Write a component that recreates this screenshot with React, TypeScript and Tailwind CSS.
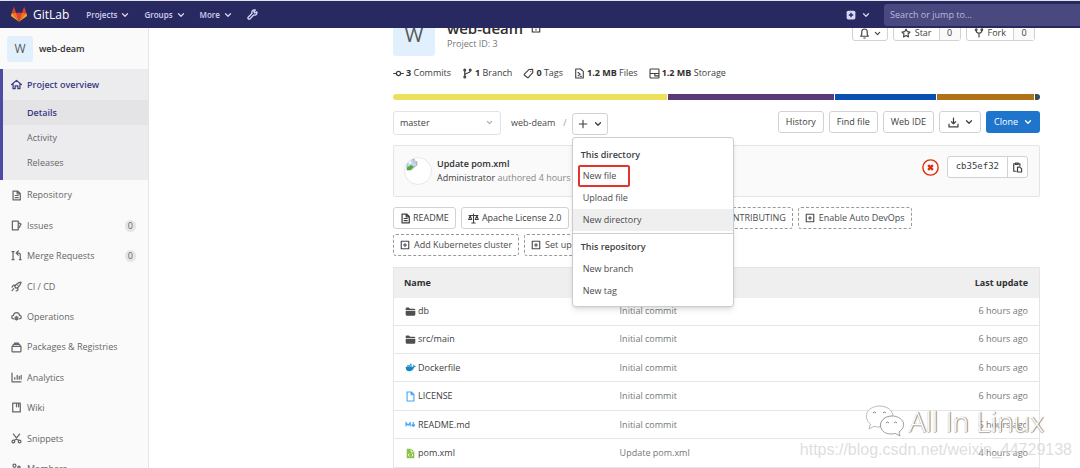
import React from "react";

type IconProps = { className?: string };

const Icon = ({ className = "size-[11px]", children }: IconProps & { children: React.ReactNode }) => (
  <svg
    viewBox="0 0 16 16"
    className={`shrink-0 ${className}`}
    fill="none"
    stroke="currentColor"
    strokeWidth="1.8"
    strokeLinecap="round"
    strokeLinejoin="round"
    aria-hidden="true"
  >
    {children}
  </svg>
);

const ChevronDown = ({ className = "size-2" }: IconProps) => (
  <Icon className={className}><path d="M3 5.5l5 5 5-5" strokeWidth="2.6" /></Icon>
);

const HomeIcon = () => (
  <Icon><path d="M1 8l7-6 7 6M3 7.5V14h3v-4h4v4h3V7.5" /></Icon>
);
const DocIcon = ({ className }: IconProps) => (
  <Icon className={className}><path d="M3 1.5h6.5L13.5 5v9.5H3zM6 8h4.5M6 11h4.5M9 2v3.5h4" /></Icon>
);
const IssuesIcon = () => (
  <Icon><path d="M2 1.500h8.500v13H2zM10.500 3.500l4 2.500-2.500 5h-1.500" /></Icon>
);
const MergeIcon = () => (
  <Icon>
    <path d="M3 3v10M1.500 2.500h3M1.500 14h3M9 4.500h2q2.500 0 2.500 2.500V14M12.300 14h2.400M10.500 1.500L7.500 4.500l3 3" />
  </Icon>
);
const RocketIcon = () => (
  <Icon>
    <path d="M5.500 8.500Q8 2.500 14.500 1.500 13.500 8 7.500 10.500zM6.500 6L3 6.500 1.500 9M10 9.500V13L7.500 14.500M4 11l-2.500 3M10 6h.01" />
  </Icon>
);
const OperationsIcon = () => (
  <Icon>
    <path d="M3.500 11.500C0 10.500.5 6.500 3.500 6.500 4.500 1 11.500 1 12.500 6.500c3 0 3.500 4 0 5" />
    <circle cx="8" cy="10.500" r="2" />
    <path d="M8 7.500v6M5.500 9l5 3M10.500 9l-5 3" strokeWidth="1" />
  </Icon>
);
const PackageIcon = () => (
  <Icon><path d="M1.500 6.500h13v6.500q0 1.500-1.500 1.500H3q-1.500 0-1.500-1.500zM2 6.500l1.500-3h9l1.500 3M5 1.500h6" /></Icon>
);
const ChartIcon = () => (
  <Icon><path d="M1.500 1.500v12.800h13M5.500 10.500V8M9 10.500V5M12 10.500V6.500M14.800 10V5" /></Icon>
);
const BookIcon = () => (
  <Icon><path d="M2.500 1.500h11v13h-11zM8 2v5M11 2v5" /></Icon>
);
const ScissorsIcon = () => (
  <Icon>
    <circle cx="3.500" cy="12.500" r="2" />
    <circle cx="12.500" cy="12.500" r="2" />
    <path d="M3.500 1.500l7.500 9.500M12.500 1.500L5 11" />
  </Icon>
);
const MembersIcon = () => (
  <Icon>
    <circle cx="5" cy="4" r="2.200" />
    <circle cx="11.500" cy="6" r="1.600" />
    <path d="M1.500 14v-2q0-3 3.500-3t3.500 3v2zM11 10.500q3.500 0 3.500 3" />
  </Icon>
);
const WrenchIcon = () => (
  <Icon className="size-[11px]">
    <path
      d="M14.300 4.200l-2.800 1.600-1.400-1.500L12 1.500C8.500.8 6.300 3.500 7.200 6.500L2 11.500c-1.800 2 .8 4.500 2.500 2.700l5.200-5.400c3 .8 5.400-1.600 4.600-4.600z"
      strokeWidth="2"
    />
  </Icon>
);
const CommitIcon = () => (
  <Icon><circle cx="8" cy="8" r="3" /><path d="M1 8h4M11 8h4" /></Icon>
);
const BranchIcon = () => (
  <Icon>
    <circle cx="4" cy="3" r="1.300" />
    <circle cx="12" cy="3" r="1.300" />
    <circle cx="4" cy="13" r="1.300" />
    <path d="M4 4.500v7M12 4.500C12 8 4 6.500 4 10.500" />
  </Icon>
);
const TagIcon = () => (
  <Icon><path d="M8.500 2.200L14 2l.3 4.500L8 13.700q-.8.900-1.700.1L2.200 10.500q-1-.8-.2-1.700zM11.300 5h.01" strokeWidth="1.600" /></Icon>
);
const FilesIcon = () => (
  <Icon><path d="M2.500 1.500h7L13.500 5v9.500h-11zM6 6.500l3 2.500-3 2.500M9 12h2" strokeWidth="1.600" /></Icon>
);
const StorageIcon = () => (
  <Icon><path d="M1.500 2.500q0-1 1-1h11q1 0 1 1v11q0 1-1 1h-11q-1 0-1-1zM1.500 8h13M8.500 8v3.500h6" strokeWidth="1.600" /></Icon>
);
const PlusBoxIcon = () => (
  <Icon className="size-[10px]"><path d="M2 2h12v12H2zM8 5.500v5M5.500 8h5" /></Icon>
);
const ScaleIcon = () => (
  <Icon><path d="M8 1.500v13M5.500 14.500h5M1.500 3.500h13M1 9.500l2.200-5.500 2.200 5.500zM10.600 9.500L12.800 4 15 9.500z" strokeWidth="1.500" /></Icon>
);
const LockIcon = () => (
  <Icon className="size-[10px]"><path d="M2 6h12v8.500H2zM5 6V4q0-3 3-3t3 3v2M8 9.500v1.500" strokeWidth="1.700" /></Icon>
);
const BellIcon = () => (
  <Icon><path d="M2.500 12h11L12 9.500V6q0-4.500-4-4.500T4 6v3.500zM7 14.500h2" strokeWidth="1.700" /></Icon>
);
const StarIcon = () => (
  <Icon className="size-[10px]"><path d="M8 1.500l2 4.300 4.500.6-3.300 3.200.8 4.700L8 12l-4 2.300.8-4.700L1.500 6.400 6 5.800z" strokeWidth="1.700" /></Icon>
);
const ForkIcon = () => (
  <Icon className="size-[10px]">
    <circle cx="3.500" cy="2.800" r="1.400" />
    <circle cx="12.500" cy="2.800" r="1.400" />
    <path d="M3.500 4.500q0 3.500 4.500 4 4.500-.5 4.500-4M8 8.500v6" />
  </Icon>
);
const DownloadIcon = () => (
  <Icon><path d="M8 1.500v8M5 7l3 3 3-3M1.500 10.500v4h13v-4" /></Icon>
);
const CopyIcon = () => (
  <Icon><path d="M6 13.500H2.500v-11H5M9 2.500h2.500v3M5 1.500h4v2H5zM8 7.500h3.500l2.500 2.500v4.500H8z" strokeWidth="1.700" /></Icon>
);
const FolderIcon = () => (
  <svg viewBox="0 0 16 16" className="size-[11px] shrink-0" fill="#4f4f4f" aria-hidden="true">
    <path d="M1 3.500Q1 2 2.500 2h3L7.500 4H13q2 0 2 1.500v.8H1zM1 7.300h14v5.200q0 1.500-1.500 1.500h-11Q1 14 1 12.500z" />
  </svg>
);
const DockerIcon = () => (
  <svg viewBox="0 0 16 16" className="size-[11px] shrink-0" fill="#1488c6" aria-hidden="true">
    <path d="M7.500 2.500h2v2h-2zM3.200 4.700h2v2h-2zM5.400 4.700h2v2h-2zM7.600 4.700h2v2h-2zM1 6.900h11q.4-1.700 0-2.400l.9-.6q.8.8.8 1.900 1.500-.1 2.200.4-.6 1.500-2.600 1.500Q11.500 13.500 6 13.500 1 13.500 1 6.900z" />
  </svg>
);
const PageIcon = () => (
  <svg viewBox="0 0 16 16" className="size-[11px] shrink-0" fill="none" stroke="#42a5f5" strokeWidth="1.600" aria-hidden="true">
    <path d="M3 1.500h6.500L13 5v9.500H3zM9 1.500V5.500h4" />
  </svg>
);
const MarkdownIcon = () => (
  <svg viewBox="0 0 16 16" className="size-[11px] shrink-0" fill="none" stroke="#42a5f5" strokeWidth="1.700" aria-hidden="true">
    <path d="M1.500 11V5.500L4.500 9l3-3.500V11M12 4.500V10M9.500 8l2.500 2.800L14.500 8" />
  </svg>
);
const XmlIcon = () => (
  <svg viewBox="0 0 16 16" className="size-[11px] shrink-0" aria-hidden="true">
    <path d="M2.500 1h7l4 4v10h-11z" fill="#8bc34a" />
    <path d="M9 1.500V5.500h4M6.500 8l-2 2.200 2 2.200M9.500 8l2 2.200-2 2.200" fill="none" stroke="#fff" strokeWidth="1.200" />
  </svg>
);

const Tanuki = () => (
  <svg viewBox="0 0 24 22" className="h-[15px] w-4 shrink-0" aria-hidden="true">
    <path d="M12 22L7.500 8.500h9z" fill="#e24329" />
    <path d="M12 22L7.500 8.500H1.200z" fill="#fc6d26" />
    <path d="M1.200 8.500L0 12.500q-.2.800.5 1.300L12 22z" fill="#fca326" />
    <path d="M1.200 8.500h6.300L4.700.6q-.4-.8-.8 0z" fill="#e24329" />
    <path d="M12 22l4.500-13.500h6.300z" fill="#fc6d26" />
    <path d="M22.800 8.500L24 12.500q.2.800-.5 1.300L12 22z" fill="#fca326" />
    <path d="M22.800 8.500h-6.300L19.300.6q.4-.8.800 0z" fill="#e24329" />
  </svg>
);

const BrokenImage = () => (
  <svg viewBox="0 0 12 12" className="mt-px ml-px size-3" role="img" aria-label="Administrator's avatar">
    <path d="M1 0h7l3 3v3L5 11H1z" fill="#c5d6f2" stroke="#9a9a9a" strokeWidth=".7" />
    <path d="M8 0v3h3" fill="#fff" stroke="#9a9a9a" strokeWidth=".7" />
    <circle cx="4" cy="3.500" r="1.200" fill="#fff" />
    <path d="M1 11V8.500L5 6l3 1.500L4.500 11z" fill="#4caf3d" />
  </svg>
);

const btnBase = "flex items-center justify-center rounded-[3px] border border-[#d2d2d2] bg-white text-[#404040]";
const btn = `${btnBase} h-[22px]`;
const dashed =
  "flex h-[22px] items-center gap-1 whitespace-nowrap rounded-[3px] border border-dashed border-[#999] bg-white px-1.5 text-[#4a4a4a]";

const navItems: { label: string; icon: React.ReactNode; count?: number }[] = [
  { label: "Repository", icon: <DocIcon /> },
  { label: "Issues", icon: <IssuesIcon />, count: 0 },
  { label: "Merge Requests", icon: <MergeIcon />, count: 0 },
  { label: "CI / CD", icon: <RocketIcon /> },
  { label: "Operations", icon: <OperationsIcon /> },
  { label: "Packages & Registries", icon: <PackageIcon /> },
  { label: "Analytics", icon: <ChartIcon /> },
  { label: "Wiki", icon: <BookIcon /> },
  { label: "Snippets", icon: <ScissorsIcon /> },
  { label: "Members", icon: <MembersIcon /> },
];

const files = [
  { name: "db", icon: <FolderIcon />, commit: "Initial commit", time: "6 hours ago" },
  { name: "src/main", icon: <FolderIcon />, commit: "Initial commit", time: "6 hours ago" },
  { name: "Dockerfile", icon: <DockerIcon />, commit: "Initial commit", time: "6 hours ago" },
  { name: "LICENSE", icon: <PageIcon />, commit: "Initial commit", time: "6 hours ago" },
  { name: "README.md", icon: <MarkdownIcon />, commit: "Initial commit", time: "6 hours ago" },
  { name: "pom.xml", icon: <XmlIcon />, commit: "Update pom.xml", time: "4 hours ago" },
];

function Header() {
  return (
    <header className="z-20 flex h-7 shrink-0 items-center border-t border-[#dfe3ee] bg-[#292961] text-[#d1d1f0]">
      <a href="#home" className="ml-[11px] flex items-center gap-1.5 text-[12px] text-white">
        <Tanuki />
        GitLab
      </a>
      <nav className="ml-[17px] flex items-center gap-[15px] text-[8px] font-semibold" aria-label="Main">
        {["Projects", "Groups", "More"].map((label) => (
          <button key={label} className="flex items-center gap-1">
            {label}
            <ChevronDown />
          </button>
        ))}
        <a href="#admin" aria-label="Admin area"><WrenchIcon /></a>
      </nav>
      <button className="ml-auto flex items-center gap-1.5" aria-label="New">
        <svg viewBox="0 0 16 16" className="size-[10px]" aria-hidden="true">
          <rect x="1" y="1" width="14" height="14" rx="2.500" fill="#d8d8f4" />
          <path d="M8 4.500v7M4.500 8h7" stroke="#292961" strokeWidth="2.200" />
        </svg>
        <ChevronDown />
      </button>
      <input
        type="search"
        aria-label="Search or jump to"
        placeholder="Search or jump to..."
        className="ml-3.5 h-[22px] w-[196px] rounded-l-[3px] bg-[#494980] px-1.5 text-[9px] text-white outline-none placeholder:text-[#b9b9dc]"
      />
    </header>
  );
}

function Sidebar() {
  return (
    <aside className="flex w-[149px] shrink-0 flex-col border-r border-[#e5e5e5] bg-[#fafafa] text-[#666]">
      <a href="#project" className="flex h-[41px] shrink-0 items-center gap-1.5 pl-[7px] font-semibold text-[#303030]">
        <span className="flex size-[26px] items-center justify-center rounded-[3px] bg-[#e1f0fc] text-[12px] font-normal text-[#555]">
          W
        </span>
        web-deam
      </a>
      <div className="shrink-0 border-l-[3px] border-[#4b4ba3] bg-[#ececef] pb-[5px]">
        <a href="#overview" className="flex h-[31px] items-center gap-[5px] pl-2 font-semibold text-[#393982]">
          <HomeIcon />
          Project overview
        </a>
        <a href="#details" className="flex h-[25px] items-center bg-[#e4e4e6] pl-6 font-semibold text-[#393982]">
          Details
        </a>
        <a href="#activity" className="flex h-[25px] items-center pl-6">Activity</a>
        <a href="#releases" className="flex h-[25px] items-center pl-6">Releases</a>
      </div>
      <ul className="grid h-76 shrink-0 auto-rows-fr">
        {navItems.map((item) => (
          <li key={item.label} className="flex">
            <a href="#nav" className="flex flex-1 items-center gap-[5px] pr-3 pl-[11px]">
              {item.icon}
              {item.label}
              {item.count !== undefined && (
                <span className="ml-auto rounded-full bg-[#e6e6e6] px-[3px] leading-3">{item.count}</span>
              )}
            </a>
          </li>
        ))}
      </ul>
    </aside>
  );
}

function ProjectHead() {
  const count = "flex h-full w-[21px] items-center justify-center border-l border-[#d2d2d2] bg-[#fafafa]";
  return (
    <div className="flex items-end">
      <div className="flex size-[42px] items-center justify-center rounded-[3px] bg-[#e1f0fc] text-[20px] text-[#555]">W</div>
      <div className="ml-3 pb-1.5">
        <h1 className="flex items-center gap-2 text-[15px] leading-5 font-semibold text-[#303030]">
          web-deam
          <LockIcon />
        </h1>
        <p className="leading-3 text-[#777]">Project ID: 3</p>
      </div>
      <div className="mb-[15px] ml-auto flex gap-[5px] pr-[5px] text-[#555]">
        <button className={`${btnBase} h-4 w-9 gap-1`} aria-label="Notifications">
          <BellIcon />
          <ChevronDown className="size-[7px]" />
        </button>
        <div className={`${btnBase} h-4`}>
          <button className="flex items-center gap-1 px-[7px]"><StarIcon />Star</button>
          <a href="#stars" className={count}>0</a>
        </div>
        <div className={`${btnBase} h-4`}>
          <button className="flex items-center gap-1 px-[7px]"><ForkIcon />Fork</button>
          <a href="#forks" className={count}>0</a>
        </div>
      </div>
    </div>
  );
}

function Stats() {
  const stats = [
    { icon: <CommitIcon />, value: "3", label: "Commits" },
    { icon: <BranchIcon />, value: "1", label: "Branch" },
    { icon: <TagIcon />, value: "0", label: "Tags" },
    { icon: <FilesIcon />, value: "1.2 MB", label: "Files" },
    { icon: <StorageIcon />, value: "1.2 MB", label: "Storage" },
  ];
  return (
    <nav className="mt-[9px] flex h-4 items-center gap-[11px] text-[#404040]" aria-label="Project statistics">
      {stats.map((s) => (
        <a key={s.label} href="#stat" className="flex items-center gap-0.5">
          {s.icon}
          <span><strong className="font-bold text-[#303030]">{s.value}</strong> {s.label}</span>
        </a>
      ))}
    </nav>
  );
}

function NewMenu() {
  const item = "flex h-[22px] w-full items-center px-2.5 text-left text-[#4a4a4a]";
  return (
    <div className="absolute top-[24px] left-0 z-10 w-[162px] rounded-[3px] border border-[#ccc] bg-white pt-[7px] pb-1 shadow-md">
      <p className="flex h-5 items-center px-2 font-semibold text-[#404040]">This directory</p>
      <div className="relative">
        <button className={item}>New file</button>
        <span className="pointer-events-none absolute inset-y-0 left-[5px] w-[52px] rounded-[2px] border-2 border-[#e5322d]" />
      </div>
      <button className={item}>Upload file</button>
      <button className={`${item} bg-[#efefef]`}>New directory</button>
      <hr className="my-0.5 border-[#ccc]" />
      <p className="flex h-[22px] items-center px-2 font-semibold text-[#404040]">This repository</p>
      <button className={item}>New branch</button>
      <button className={item}>New tag</button>
    </div>
  );
}

function Toolbar() {
  return (
    <div className="mt-[11px] flex items-start">
      <div className="relative w-[108px]">
        <select
          aria-label="Branch"
          className="h-6 w-full appearance-none rounded-[3px] border border-[#e3e3e3] bg-white px-1.5 text-[#404040]"
        >
          <option>master</option>
        </select>
        <ChevronDown className="pointer-events-none absolute top-2 right-2 size-[7px] text-[#aaa]" />
      </div>
      <div className="ml-2.5 flex h-6 items-center gap-2 text-[#4a4a4a]">
        <a href="#root">web-deam</a>
        <span className="text-[#999]">/</span>
      </div>
      <div className="relative mt-0.5 ml-[5px]">
        <button className={`${btn} w-9 gap-1.5`} aria-label="Add to tree" aria-expanded="true">
          <Icon className="size-[10px]"><path d="M8 2v12M2 8h12" /></Icon>
          <ChevronDown />
        </button>
        <NewMenu />
      </div>
      <div className="ml-auto flex gap-[5px]">
        <button className={`${btn} px-[7px]`}>History</button>
        <button className={`${btn} px-[7px]`}>Find file</button>
        <button className={`${btn} px-[7px]`}>Web IDE</button>
        <button className={`${btn} w-[42px] gap-1.5`} aria-label="Download"><DownloadIcon /><ChevronDown /></button>
        <button className="flex h-[22px] w-[54px] items-center justify-center gap-1.5 rounded-[3px] bg-[#1f75cb] text-white">
          Clone<ChevronDown />
        </button>
      </div>
    </div>
  );
}

function LastCommit() {
  return (
    <div className="mt-2.5 flex h-[52px] items-center rounded-[2px] border border-[#e5e5e5] bg-[#fafafa] pr-[11px] pl-2.5">
      <span className="size-7 overflow-hidden rounded-full border border-[#e8e8e8] bg-white"><BrokenImage /></span>
      <div className="ml-[5px] leading-[14px]">
        <a href="#commit" className="block font-semibold text-[#303030]">Update pom.xml</a>
        <p className="text-[#888]"><a href="#admin" className="text-[#404040]">Administrator</a> authored 4 hours ago</p>
      </div>
      <a href="#pipeline" aria-label="Pipeline: failed" className="mb-2 ml-auto">
        <svg viewBox="0 0 16 16" className="size-[17px]" fill="none" stroke="#dd2b0e" aria-hidden="true">
          <circle cx="8" cy="8" r="7.200" strokeWidth="1.300" />
          <path d="M5.800 5.800l4.400 4.400M10.200 5.800l-4.400 4.400" strokeWidth="2.200" />
        </svg>
      </a>
      <div className={`${btn} mb-2 ml-2`}>
        <span className="px-2 font-['DejaVu_Sans_Mono',monospace]">cb35ef32</span>
        <button aria-label="Copy commit SHA" className="flex h-full w-5 items-center justify-center border-l border-[#d2d2d2]"><CopyIcon /></button>
      </div>
    </div>
  );
}

function FileTable() {
  return (
    <table className="mt-[11px] h-[201px] w-full table-fixed border-collapse border border-[#e5e5e5] text-left">
      <thead className="bg-[#efeff0] text-[#303030]">
        <tr className="h-[30px]">
          <th className="w-[35%] pl-2.5 font-bold">Name</th>
          <th aria-label="Last commit" />
          <th className="w-[20%] pr-[11px] text-right font-bold">Last update</th>
        </tr>
      </thead>
      <tbody>
        {files.map((f) => (
          <tr key={f.name} className="border-b border-[#e5e5e5] bg-white">
            <td className="pl-[11px]">
              <a href="#file" className="flex items-center gap-0.5 text-[#404040]">{f.icon}{f.name}</a>
            </td>
            <td className="text-[#777]">{f.commit}</td>
            <td className="pr-[11px] text-right text-[#777]">{f.time}</td>
          </tr>
        ))}
      </tbody>
    </table>
  );
}

function Watermark() {
  return (
    <div className="pointer-events-none absolute right-2 bottom-2 z-20 flex flex-col">
      <div className="mr-7 flex items-center justify-end gap-1 pb-0.5 text-[28px] leading-8 font-light text-white [text-shadow:1px_0_1px_#777,0_1px_1px_#aaa]">
        <svg viewBox="0 0 40 34" className="h-[34px] w-10" fill="#fff" stroke="#888" strokeWidth=".8" aria-hidden="true">
          <path d="M4 25l1.500-5C-2 14 .5 3 14 2c9 0 14 5 14 10q-12 0-13 11-3 .3-6-.7z" stroke="#aaa" />
          <path d="M35 32l-4.500-2.500C21 31.500 15 27 15.500 20.500 17 10 35 9 38.500 19q1 5-4.500 9z" />
          <path d="M8 9q1.500-2 3 0M18 9q1.500-2 3 0M21 19q1.500-2 3 0M29 19q1.500-2 3 0" fill="none" stroke="#666" />
        </svg>
        All In Linux
      </div>
      <p className="font-['Liberation_Sans',sans-serif] text-[16px] leading-5 text-[#cfcfcf]/70">
        https://blog.csdn.net/weixin_44729138
      </p>
    </div>
  );
}

export default function App() {
  return (
    <div className="relative flex h-screen flex-col overflow-hidden bg-white font-['Open_Sans',sans-serif] text-[9px]">
      <Header />
      <div className="flex min-h-0 flex-1 overflow-hidden">
        <Sidebar />
        <main className="-mt-3.5 min-w-0 flex-1 pr-10 pl-61">
          <ProjectHead />
          <Stats />
          <div className="mt-[13px] flex h-1.5 gap-px overflow-hidden rounded-full" role="img" aria-label="Repository languages">
            <span className="grow-[274] bg-[#ece05c]" />
            <span className="grow-[165] bg-[#583a78]" />
            <span className="grow-[101] bg-[#0a50b2]" />
            <span className="grow-[97] bg-[#b07219]" />
            <span className="grow-[5] bg-[#384d54]" />
          </div>
          <Toolbar />
          <LastCommit />
          <div className="mt-2.5 flex flex-wrap gap-[5px] pr-4 text-[#404040]">
            <a href="#readme" className={`${btn} gap-0.5 px-1.5`}><DocIcon />README</a>
            <a href="#license" className={`${btn} gap-[3px] px-1.5`}><ScaleIcon />Apache License 2.0</a>
            <a href="#changelog" className={dashed}><PlusBoxIcon />Add CHANGELOG</a>
            <a href="#contributing" className={dashed}><PlusBoxIcon />Add CONTRIBUTING</a>
            <a href="#devops" className={dashed}><PlusBoxIcon />Enable Auto DevOps</a>
            <a href="#kubernetes" className={dashed}><PlusBoxIcon />Add Kubernetes cluster</a>
            <a href="#cicd" className={dashed}><PlusBoxIcon />Set up CI/CD</a>
          </div>
          <FileTable />
        </main>
      </div>
      <Watermark />
    </div>
  );
}
